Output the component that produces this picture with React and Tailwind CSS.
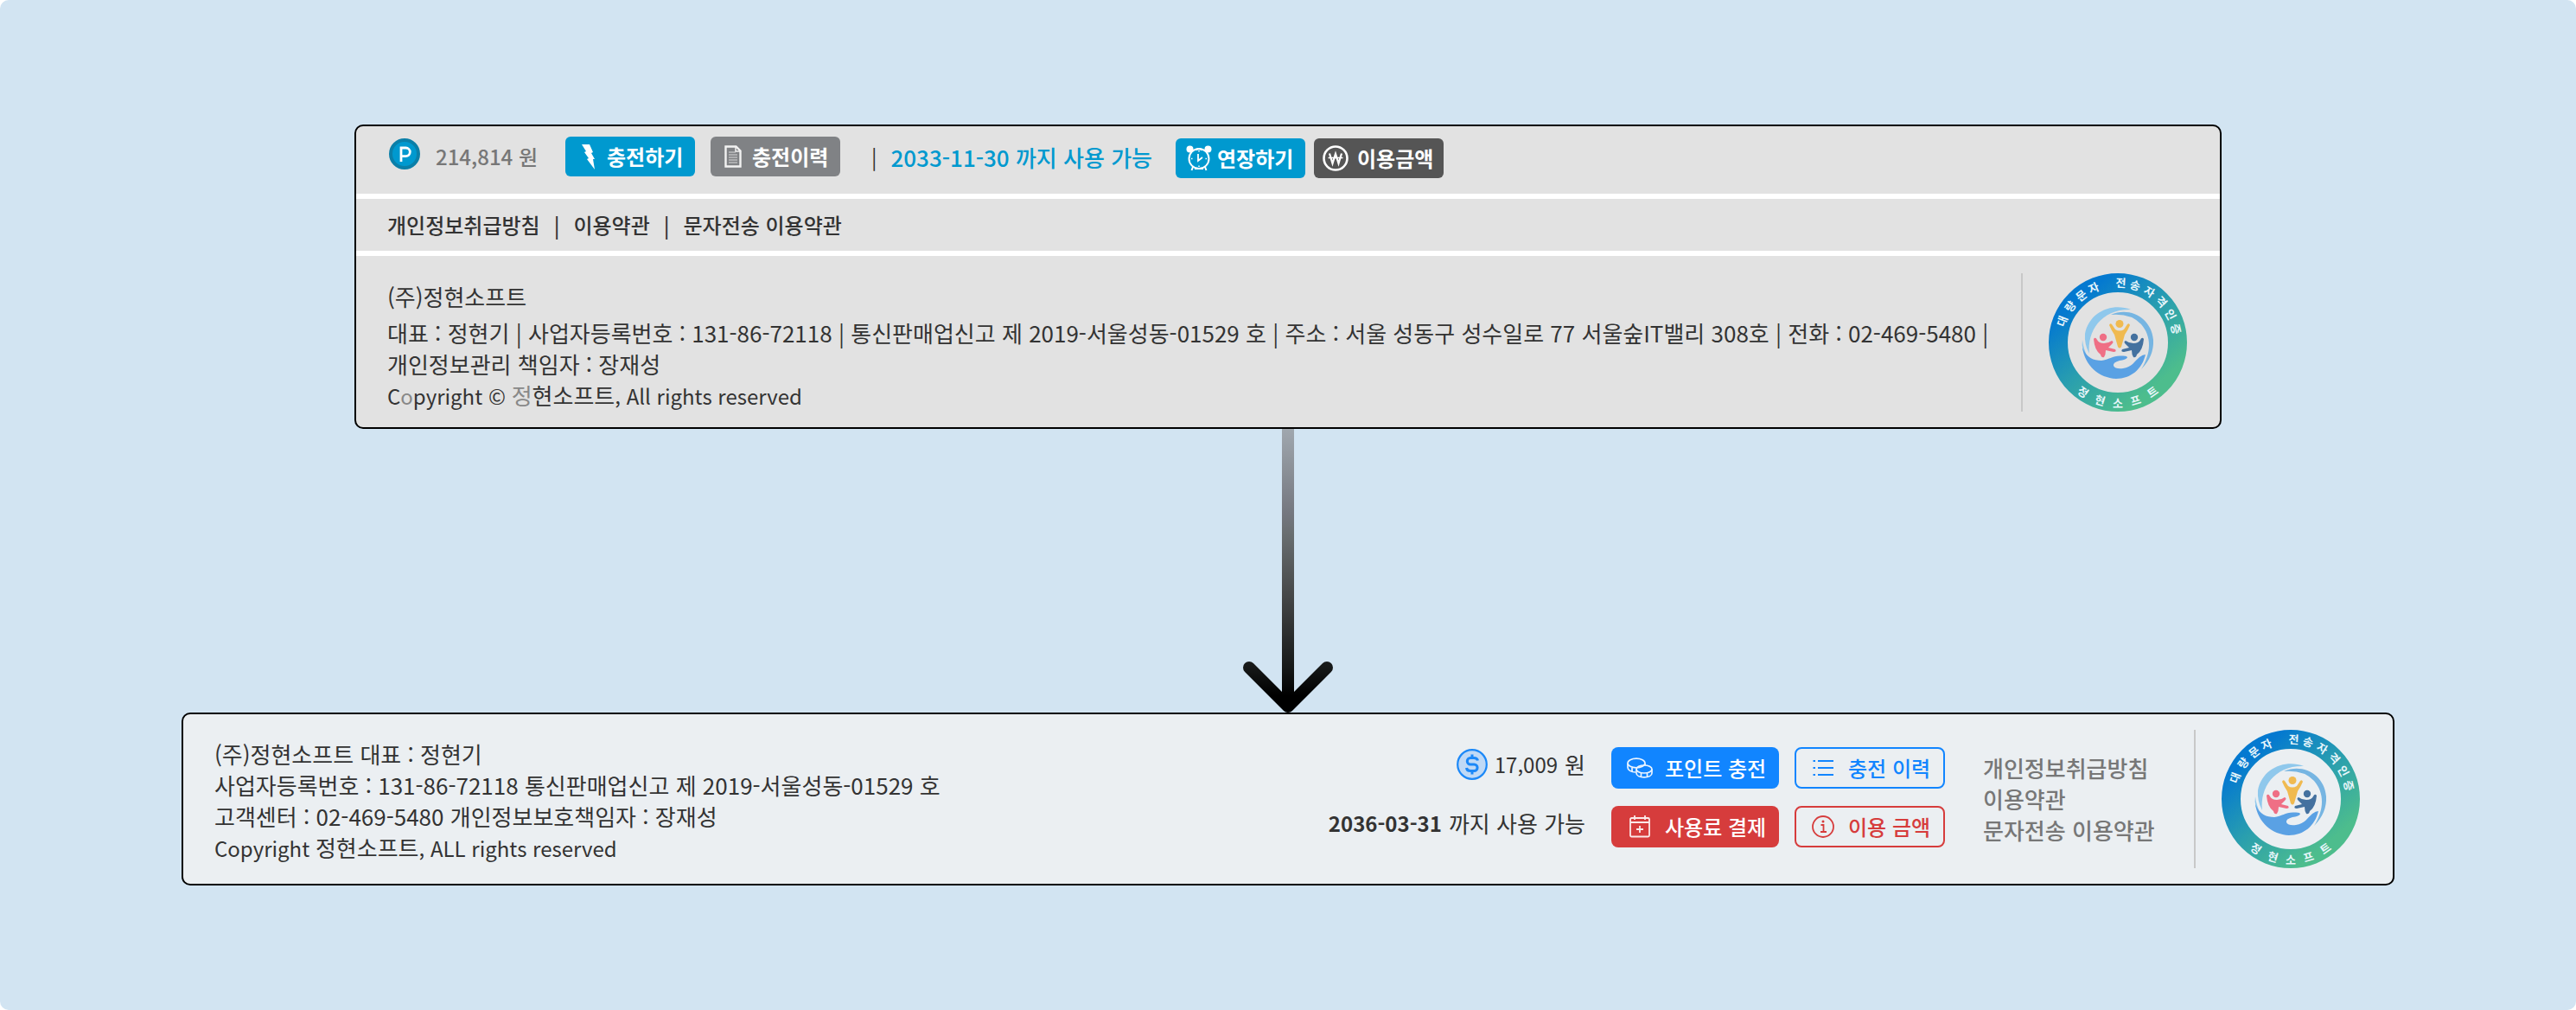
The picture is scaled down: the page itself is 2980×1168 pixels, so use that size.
const FONT = "font-['Noto_Sans_CJK_KR','Noto_Sans',sans-serif]";

const TOP_LETTERS = [
  ["대", -69], ["량", -53], ["문", -38], ["자", -24], ["전", 3],
  ["송", 17], ["자", 32], ["격", 47], ["인", 62], ["증", 77],
];
const BOTTOM_LETTERS = [["정", 35], ["현", 17], ["소", 0], ["프", -17], ["트", -35]];

function Emblem({ id }) {
  return (
    <svg viewBox="0 0 160 160" className="size-40 shrink-0" role="img" aria-label="대량문자 전송자격인증 정현소프트">
      <defs>
        <linearGradient id={id} x1="0.2" y1="0.12" x2="0.82" y2="0.86">
          <stop offset="0" stopColor="#0479d0" />
          <stop offset="0.5" stopColor="#2a9fae" />
          <stop offset="1" stopColor="#4dbd8d" />
        </linearGradient>
      </defs>
      <circle cx="80" cy="80" r="69" fill="none" stroke={`url(#${id})`} strokeWidth="22" />
      <g fill="#e8f6fb" fontSize="13" fontWeight="700" textAnchor="middle">
        {TOP_LETTERS.map(([c, a], i) => (
          <text key={i} x="80" y="16" transform={`rotate(${a} 80 80)`}>{c}</text>
        ))}
        {BOTTOM_LETTERS.map(([c, a], i) => (
          <text key={i} x="80" y="155" transform={`rotate(${a} 80 80)`}>{c}</text>
        ))}
      </g>
      <path d="M95 42C74 34 47 44 42 70Q41 82 47 93C44 66 62 41 95 42Z" fill="#8fc8ec" />
      <path d="M39 77Q37 90 45 97Q40 87 39 77Z" fill="#8fc8ec" />
      <path d="M72 48C94 38 119 52 121 77Q122 96 107 111C119 92 119 73 107 59Q95 46 72 48Z" fill="#76b5e2" />
      <path d="M39 86C44 98 52 101 61 101C70 100 74 95 84 95.500Q91 95 91 97.500Q89 100 82 101Q74 103 75 107Q77 111 86 110C96 109 100 101 105 97Q109 94 112 94C108 111 95 122 78 122C58 121 42 107 39 86Z" fill="#5aa1e4" />
      <g fill="#f0ba50">
        <circle cx="82" cy="58.500" r="4.500" />
        <path d="M70 60Q71 57 73 59L77 65Q82 68 87 65L91 59Q93 57 94 60Q91 67 88 71L84 85Q82 88 80 85L76 71Q73 67 70 60Z" />
      </g>
      <g fill="#ef6f85">
        <circle cx="63" cy="74" r="4.200" />
        <path d="M52 76Q54 73 56 77Q58 81 64 81Q69 81 73 78Q76 79 73 82L69 86L77 88Q79 91 75 91L66 89Q66 94 64 97Q61 98 60 94Q53 89 52 76Z" />
      </g>
      <g fill="#44719f">
        <circle cx="99" cy="74" r="4.200" />
        <path d="M110 76Q108 73 106 77Q104 81 98 81Q93 81 89 78Q86 79 89 82L93 86L85 88Q83 91 87 91L96 89Q96 94 98 97Q101 98 102 94Q109 89 110 76Z" />
      </g>
    </svg>
  );
}

function PointIcon() {
  return (
    <svg viewBox="0 0 36 36" className="size-9 shrink-0" aria-hidden="true">
      <circle cx="18" cy="18" r="16" fill="#0099cf" stroke="#0b7fa8" strokeWidth="4" />
      <path d="M14 27V11h5.500a4.800 4.800 0 0 1 0 9.600H14" fill="none" stroke="#fff" strokeWidth="2.800" />
    </svg>
  );
}

function BoltIcon() {
  return (
    <svg viewBox="0 0 18 30" className="h-[30px] w-[18px]" aria-hidden="true">
      <path d="M1 1h9l4 9-2 1 4 7h-2l2 12L7 18l2-1-5-7 2-1Z" fill="#fff" />
    </svg>
  );
}

function DocumentIcon() {
  return (
    <svg viewBox="0 0 20 26" className="h-[26px] w-5" fill="none" stroke="#f2f2f2" aria-hidden="true">
      <path d="M1.500 1.500h12l5 5v18h-17Z" strokeWidth="2.400" />
      <path d="M5 8h8M5 11h10M5 14h10M5 17h10M5 20h10" stroke="#bcbdbf" strokeWidth="1.300" />
      <path d="M13 1.500V7h5.500" strokeWidth="1.500" />
    </svg>
  );
}

function AlarmIcon() {
  return (
    <svg viewBox="0 0 30 30" className="size-[30px]" fill="none" stroke="#fff" strokeWidth="2" aria-hidden="true">
      <circle cx="15" cy="15.500" r="11.500" />
      <circle cx="4.500" cy="4.500" r="4" fill="#fff" stroke="none" />
      <circle cx="25.500" cy="4.500" r="4" fill="#fff" stroke="none" />
      <path d="M11 5.500Q15 3 19 5.500M8 25l-1.500 4M22 25l1.500 4M10 27h10" />
      <path d="M14 10v8l5-4" strokeWidth="1.800" />
      <path d="M15 6v1.500M15 23.500V25M6 15.500h1.500M22.500 15.500H24" strokeWidth="1.500" />
    </svg>
  );
}

function WonIcon() {
  return (
    <svg viewBox="0 0 30 30" className="size-[30px]" fill="none" stroke="#fff" aria-hidden="true">
      <circle cx="15" cy="15" r="13.500" strokeWidth="2.600" />
      <path d="M8 9.500l3.500 11.500L15 10l3.500 11L22 9.500" strokeWidth="2.200" />
      <path d="M6.500 14.500h17" strokeWidth="1.500" />
    </svg>
  );
}

function DollarIcon() {
  return (
    <svg viewBox="0 0 36 36" className="size-9" fill="none" stroke="#1b88f8" aria-hidden="true">
      <circle cx="18" cy="18" r="16.800" fill="#bfd9f6" strokeWidth="2.200" />
      <path d="M24.500 13.500C24 11.500 22 10.500 20 10.500h-4a3.700 3.700 0 0 0 0 7.400h4.300a3.800 3.800 0 0 1 0 7.600H16c-2.500 0-4.300-1.500-4.500-3.500M18 6.500v4M18 25.500v4" strokeWidth="3" />
    </svg>
  );
}

function CoinsIcon() {
  return (
    <svg viewBox="0 0 30 24" className="h-6 w-[30px]" fill="none" stroke="#eaf4ff" strokeWidth="1.700" aria-hidden="true">
      <ellipse cx="11" cy="6.500" rx="10" ry="5.300" />
      <path d="M1 7v4.500c0 3 4 5.500 9 5.500M6 11.500v4.500M21 7v2" />
      <ellipse cx="20" cy="13.500" rx="9" ry="4.500" />
      <path d="M11 13.500V18c0 3 4 4.800 9 4.800s9-1.800 9-4.800v-4.500M16.500 17.500v4.500M23.500 17.500v4.500" />
    </svg>
  );
}

function CalendarPlusIcon() {
  return (
    <svg viewBox="0 0 24 26" className="mx-[3px] h-[26px] w-6" fill="none" stroke="#fbe9e9" strokeWidth="1.800" aria-hidden="true">
      <rect x="1" y="3" width="22" height="21.500" rx="1.500" />
      <path d="M1 8h22M6 0v5M18 0v5M12 12v8M8 16h8" />
    </svg>
  );
}

function ListIcon() {
  return (
    <svg viewBox="0 0 26 20" className="h-5 w-[26px]" fill="none" stroke="currentColor" strokeWidth="2" aria-hidden="true">
      <path d="M7 2h18M7 10h18M7 18h18M1.500 2h2.500M1.500 10h2.500M1.500 18h2.500" />
    </svg>
  );
}

function InfoIcon() {
  return (
    <svg viewBox="0 0 26 26" className="size-[26px]" fill="none" stroke="currentColor" strokeWidth="1.800" aria-hidden="true">
      <circle cx="13" cy="13" r="12" />
      <path d="M10.500 11H13.500v8M10 19h7" />
      <circle cx="13" cy="7" r="1.500" fill="currentColor" stroke="none" />
    </svg>
  );
}

function Arrow() {
  return (
    <svg viewBox="0 0 104 328" className="mx-auto block h-[328px] w-[104px]" aria-hidden="true">
      <defs>
        <linearGradient id="shaft" gradientUnits="userSpaceOnUse" x1="0" y1="0" x2="0" y2="328">
          <stop offset="0" stopColor="#a0a7ae" />
          <stop offset="0.300" stopColor="#74777f" />
          <stop offset="0.370" stopColor="#696e70" />
          <stop offset="0.600" stopColor="#434546" />
          <stop offset="0.840" stopColor="#161818" />
          <stop offset="0.940" stopColor="#000" />
        </linearGradient>
      </defs>
      <path d="M45 0h14v320H45Z" fill="url(#shaft)" />
      <path d="M7 276l45 45 45-45" fill="none" stroke="url(#shaft)" strokeWidth="14" strokeLinecap="round" strokeLinejoin="round" />
    </svg>
  );
}

const smallButton = "flex h-[46px] w-[150px] items-center rounded-md text-2xl font-bold whitespace-nowrap text-white";
const bigButton = "flex h-12 items-center rounded-lg text-2xl font-medium whitespace-nowrap";

function LegacyFooter() {
  return (
    <footer className="mx-[200px] overflow-hidden rounded-[10px] border-2 border-black bg-[#e2e2e2] text-[#333]">
      <div className="flex h-[78px] items-start px-[38px] pt-3">
        <div className="flex h-[46px] items-center gap-[18px]">
          <span className="pb-1.5"><PointIcon /></span>
          <span className="w-[150px] text-2xl font-medium whitespace-nowrap text-[#777]">214,814 원</span>
        </div>
        <div className="flex gap-[18px]">
          <button type="button" className={`${smallButton} gap-3 bg-[#0099cf] pl-[18px]`}><BoltIcon />충전하기</button>
          <button type="button" className={`${smallButton} gap-3 bg-[#808285] pl-4`}><DocumentIcon />충전이력</button>
        </div>
        <div className="ml-9 flex h-[46px] w-[352px] items-center gap-4 text-[26px] whitespace-nowrap">
          <span className="text-2xl">|</span>
          <span className="font-medium text-[#0099cf]">2033-11-30 까지 사용 가능</span>
        </div>
        <div className="mt-0.5 flex gap-2.5">
          <button type="button" className={`${smallButton} gap-1.5 bg-[#0099cf] pl-3`}><AlarmIcon />연장하기</button>
          <button type="button" className={`${smallButton} gap-2.5 bg-[#555] pl-2.5`}><WonIcon />이용금액</button>
        </div>
      </div>
      <nav className="flex h-[72px] items-center gap-4 border-y-[6px] border-white px-9 text-2xl font-medium">
        <a href="#privacy">개인정보취급방침</a>
        <span>|</span>
        <a href="#terms">이용약관</a>
        <span>|</span>
        <a href="#sms-terms">문자전송 이용약관</a>
      </nav>
      <div className="flex items-center gap-[30px] pt-5 pr-[38px] pb-[18px] pl-9">
        <div className="flex-1 pt-2 text-[26px] leading-9 break-keep">
          <p className="mb-1.5">(주)정현소프트</p>
          <p>
            대표 : 정현기 | 사업자등록번호 : 131-86-72118 | 통신판매업신고 제 2019-서울성동-01529 호 | 주소 : 서울 성동구 성수일로 77 서울숲IT밸리 308호 | 전화 : 02-469-5480 | 개인정보관리 책임자 : 장재성
          </p>
          <p className="text-2xl leading-9">
            C<span className="text-[#888]">o</span>pyright © <span className="text-[26px]"><span className="text-[#888]">정</span>현소프트</span>, All rights reserved
          </p>
        </div>
        <div className="border-l-2 border-[#c8c8c8] pl-[30px]"><Emblem id="ring-a" /></div>
      </div>
    </footer>
  );
}

function RenewedFooter() {
  return (
    <footer className="flex items-center rounded-[10px] border-2 border-black bg-[#ebeff2] py-[18px] pr-[38px] pl-9 text-[26px] leading-9 whitespace-nowrap text-[#333]">
      <div className="flex-1 pt-1">
        <p>(주)정현소프트 대표 : 정현기</p>
        <p>사업자등록번호 : 131-86-72118 통신판매업신고 제 2019-서울성동-01529 호</p>
        <p>고객센터 : 02-469-5480 개인정보보호책임자 : 장재성</p>
        <p className="text-2xl leading-9">Copyright <span className="text-[26px]">정현소프트</span>, ALL rights reserved</p>
      </div>
      <div className="mr-[30px] mb-3 grid gap-5">
        <p className="flex h-12 items-center justify-end gap-2"><DollarIcon /><span className="text-2xl">17,009</span>원</p>
        <p className="flex h-12 items-center justify-end gap-2"><b className="text-2xl font-bold">2036-03-31</b> 까지 사용 가능</p>
      </div>
      <div className="mr-11 mb-1 grid grid-cols-[194px_174px] gap-x-[18px] gap-y-5">
        <button type="button" className={`${bigButton} gap-3.5 bg-[#1185ff] pl-[18px] text-white`}><CoinsIcon />포인트 충전</button>
        <button type="button" className={`${bigButton} gap-4 border-2 border-[#1185ff] pl-[18px] text-[#1185ff]`}><ListIcon />충전 이력</button>
        <button type="button" className={`${bigButton} gap-3.5 bg-[#d63c3c] pl-[18px] text-white`}><CalendarPlusIcon />사용료 결제</button>
        <button type="button" className={`${bigButton} gap-4 border-2 border-[#d63c3c] pl-[18px] text-[#d63c3c]`}><InfoIcon />이용 금액</button>
      </div>
      <nav className="mr-11 grid w-[200px] font-medium text-[#777]">
        <a href="#privacy">개인정보취급방침</a>
        <a href="#terms">이용약관</a>
        <a href="#sms-terms">문자전송 이용약관</a>
      </nav>
      <div className="border-l-2 border-[#c8c8c8] pl-[30px]"><Emblem id="ring-b" /></div>
    </footer>
  );
}

export default function App() {
  return (
    <div className="bg-white">
      <main lang="ko" className={`${FONT} rounded-[10px] bg-[#d2e4f2] px-[210px] py-36`}>
        <LegacyFooter />
        <Arrow />
        <RenewedFooter />
      </main>
    </div>
  );
}
